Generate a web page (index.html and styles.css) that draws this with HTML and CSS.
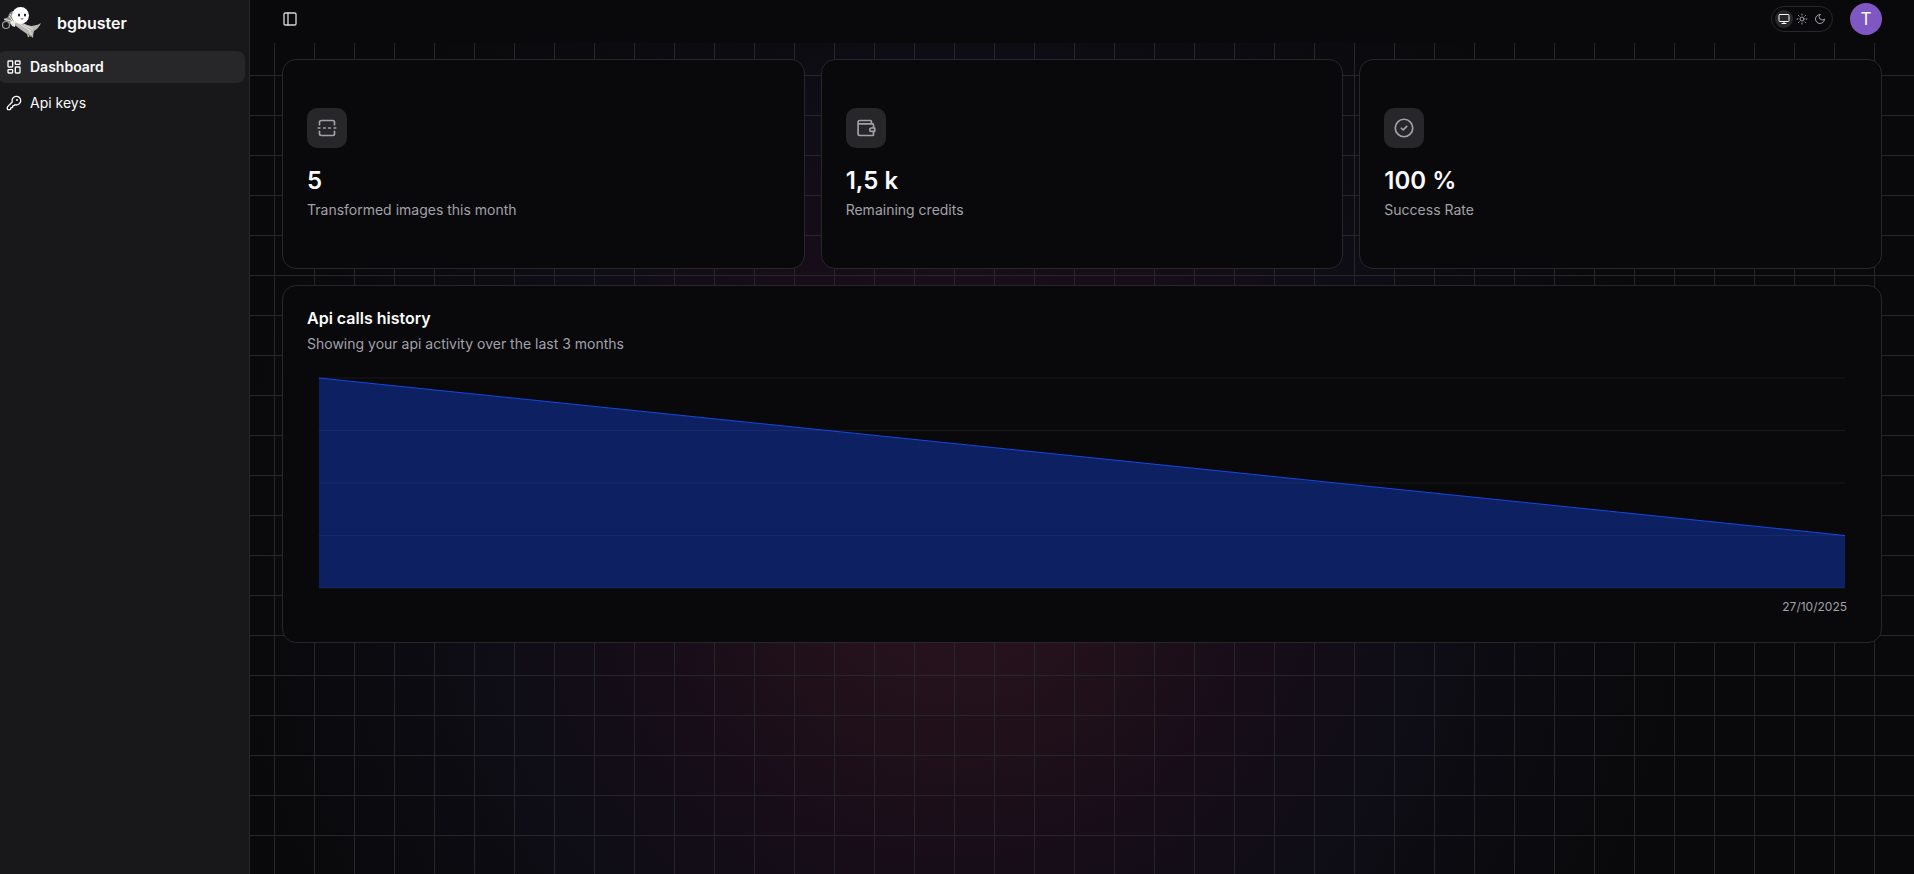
FILE: index.html
```html
<!DOCTYPE html>
<html lang="en">
<head>
  <meta charset="UTF-8">
  <meta name="viewport" content="width=device-width, initial-scale=1.0">
  <title>bgbuster</title>
  <link rel="stylesheet" href="styles.css">
</head>
<body>
  <aside class="sidebar">
    <a class="brand" href="#">
      <svg class="brand-logo" viewBox="0 0 40 40" aria-hidden="true">
        <path d="M15 19 L22 20 Q29 24 33 22.500 Q37 22 40 20 Q38 25 33 28 Q32 31 32 35 L29.500 32.500 L27 34.500 L26 31 Q20 27 15 23 Z" fill="#b9b7b2"/>
        <path d="M17 20 L30 28 M23 22 L32 26 M28 28 L31 32" stroke="#e6e4df" stroke-width="1" fill="none"/>
        <path d="M27 31 L30 34" stroke="#7b776d" stroke-width="1"/>
        <path d="M12 8 Q8 9 7 14 L3 16 Q3 18 6 18 L9 21 L15 23 L14 14 Z" fill="#8b8983"/>
        <path d="M9 11 L12 15 M3 16 L10 18 M8 13 L13 20" stroke="#e4e4e0" stroke-width="1"/>
        <circle cx="5" cy="22" r="3.500" fill="none" stroke="#a3a19c" stroke-width="1.200"/>
        <circle cx="19.500" cy="12.500" r="8.500" fill="#fff"/>
        <ellipse cx="18" cy="12" rx="1" ry="1.600" fill="#111"/>
        <ellipse cx="24" cy="12" rx="1" ry="1.600" fill="#111"/>
        <path d="M19.800 15.500 Q21 16.800 22.300 15.500" stroke="#222" stroke-width="0.800" fill="none"/>
        <path d="M9 19 Q12 16 15 19 L14 24 L11 23 Z" fill="#e9e9e6"/>
      </svg>
      <span>bgbuster</span>
    </a>

    <nav class="menu">
      <a class="menu-item active" href="#">
        <svg class="icon" viewBox="0 0 24 24"><rect x="3" y="3" width="7" height="9" rx="1"/><rect x="14" y="3" width="7" height="5" rx="1"/><rect x="14" y="12" width="7" height="9" rx="1"/><rect x="3" y="16" width="7" height="5" rx="1"/></svg>
        <span>Dashboard</span>
      </a>
      <a class="menu-item" href="#">
        <svg class="icon" viewBox="0 0 24 24"><path d="M2.586 17.414A2 2 0 0 0 2 18.828V21a1 1 0 0 0 1 1h3a1 1 0 0 0 1-1v-1a1 1 0 0 1 1-1h1a1 1 0 0 0 1-1v-1a1 1 0 0 1 1-1h.172a2 2 0 0 0 1.414-.586l.814-.814a6.500 6.500 0 1 0-4-4z"/><circle cx="16.500" cy="7.500" r=".5" fill="currentColor"/></svg>
        <span>Api keys</span>
      </a>
    </nav>
  </aside>

  <div class="main">
    <header class="topbar">
      <button class="sidebar-toggle" type="button" aria-label="Toggle sidebar">
        <svg class="icon" viewBox="0 0 24 24"><rect x="3" y="3" width="18" height="18" rx="2"/><path d="M9 3v18"/></svg>
      </button>

      <div class="topbar-right">
        <div class="theme-switch">
          <button class="theme-btn active" type="button" aria-label="System theme">
            <svg class="icon" viewBox="0 0 24 24"><rect x="2" y="3" width="20" height="14" rx="2"/><path d="M8 21h8M12 17v4"/></svg>
          </button>
          <button class="theme-btn" type="button" aria-label="Light theme">
            <svg class="icon" viewBox="0 0 24 24"><circle cx="12" cy="12" r="4"/><path d="M12 2v2M12 20v2M4.930 4.930l1.410 1.410M17.660 17.660l1.410 1.410M2 12h2M20 12h2M6.340 17.660l-1.410 1.410M19.070 4.930l-1.410 1.410"/></svg>
          </button>
          <button class="theme-btn" type="button" aria-label="Dark theme">
            <svg class="icon" viewBox="0 0 24 24"><path d="M12 3a6 6 0 0 0 9 9 9 9 0 1 1-9-9Z"/></svg>
          </button>
        </div>
        <button class="avatar" type="button" aria-label="Account">T</button>
      </div>
    </header>

    <main class="content">
      <section class="stats">
        <div class="card stat">
          <div class="stat-icon">
            <svg class="icon" viewBox="0 0 24 24"><path d="M3 8V5a2 2 0 0 1 2-2h14a2 2 0 0 1 2 2v3M21 16v3a2 2 0 0 1-2 2H5a2 2 0 0 1-2-2v-3"/><path d="M1.500 12h2M8 12h2M14 12h2M20.500 12h2"/></svg>
          </div>
          <div class="stat-value">5</div>
          <div class="stat-label">Transformed images this month</div>
        </div>

        <div class="card stat">
          <div class="stat-icon">
            <svg class="icon" viewBox="0 0 24 24"><path d="M18.500 7V4a1 1 0 0 0-1-1H4.500a2 2 0 0 0 0 4H20a1 1 0 0 1 1 1v3.500M21 16.500V20a1 1 0 0 1-1 1H4.500a2 2 0 0 1-2-2V5"/><path d="M22.500 12h-4a2 2 0 0 0 0 4h4z"/></svg>
          </div>
          <div class="stat-value">1,5 k</div>
          <div class="stat-label">Remaining credits</div>
        </div>

        <div class="card stat">
          <div class="stat-icon">
            <svg class="icon" viewBox="0 0 24 24"><circle cx="12" cy="12" r="10.500"/><path d="m8.800 12.300 2.200 2 4.300-4.200"/></svg>
          </div>
          <div class="stat-value">100 %</div>
          <div class="stat-label">Success Rate</div>
        </div>
      </section>

      <section class="card history">
        <h2 class="history-title">Api calls history</h2>
        <p class="history-text">Showing your api activity over the last 3 months</p>

        <div class="chart">
          <svg class="chart-plot" viewBox="0 0 100 100" preserveAspectRatio="none" role="img" aria-label="Api calls">
            <path class="chart-grid" d="M0 0H100M0 25H100M0 50H100M0 75H100M0 100H100"/>
            <path class="chart-area" d="M0 0L100 75V100H0Z"/>
            <path class="chart-line" d="M0 0L100 75"/>
          </svg>
          <div class="chart-axis">27/10/2025</div>
        </div>
      </section>
    </main>
  </div>
</body>
</html>
```

FILE: styles.css
```css
* {
  box-sizing: border-box;
}

body {
  margin: 0;
  min-height: 100vh;
  display: flex;
  background-color: #09090b;
  color: #fafafa;
  font-family: Inter, sans-serif;
  font-size: 14px;
  line-height: 20px;
}

button {
  padding: 0;
  border: 0;
  background: none;
  color: inherit;
  font: inherit;
  cursor: pointer;
}

a {
  color: inherit;
  text-decoration: none;
}

.icon {
  width: 16px;
  height: 16px;
  flex-shrink: 0;
  fill: none;
  stroke: currentColor;
  stroke-width: 2;
  stroke-linecap: round;
  stroke-linejoin: round;
}

/* Sidebar */
.sidebar {
  width: 250px;
  flex-shrink: 0;
  overflow: hidden;
  background-color: #18181b;
  border-right: 1px solid #27272a;
}

.brand {
  display: flex;
  align-items: center;
  gap: 16px;
  padding: 3px 1px;
  font-size: 16px;
  font-weight: 600;
}
.brand-logo {
  width: 40px;
  height: 40px;
}

.menu {
  display: flex;
  flex-direction: column;
  gap: 4px;
  margin: 5px 4px 0 -2px;
}
.menu-item {
  display: flex;
  align-items: center;
  gap: 8px;
  height: 32px;
  padding: 0 8px;
  border-radius: 8px;
}
.menu-item:hover,
.menu-item.active {
  background-color: #27272a;
}
.menu-item.active {
  font-weight: 600;
}

/* Main area: grid lines over a soft glow */
.main {
  flex: 1;
  min-width: 0;
  background-image:
    linear-gradient(to right, #27272a 1px, transparent 1px),
    linear-gradient(to bottom, #27272a 1px, transparent 1px),
    radial-gradient(circle at calc(50% - 125px) 64%,
      #2b1220 0,
      #26121d 90px,
      #1f101a 200px,
      #180d19 290px,
      #0f0d16 460px,
      #0b0a0e 640px,
      #09090b 750px);
  background-size: 40px 40px, 40px 40px, 100% 100%;
  background-position: 24px 35px, 24px 35px, 0 0;
}

.topbar {
  display: flex;
  align-items: center;
  justify-content: space-between;
  padding: 3px 32px 8px;
  background-color: #09090b;
}
.topbar-right {
  display: flex;
  align-items: center;
  gap: 17px;
}
.sidebar-toggle {
  display: flex;
  color: #d4d4d8;
}

.theme-switch {
  display: flex;
  padding: 3px;
  border: 1px solid #27272a;
  border-radius: 13px;
}
.theme-btn {
  display: flex;
  align-items: center;
  justify-content: center;
  width: 18px;
  height: 18px;
  border-radius: 50%;
  color: #a1a1aa;
}
.theme-btn.active {
  background-color: #27272a;
  color: #fafafa;
}
.theme-btn .icon {
  width: 12px;
  height: 12px;
}

.avatar {
  width: 32px;
  height: 32px;
  border-radius: 50%;
  background-color: #7e57c2;
  font-size: 17px;
}

/* Cards */
.content {
  display: flex;
  flex-direction: column;
  gap: 16px;
  padding: 16px 32px;
}
.stats {
  display: grid;
  grid-template-columns: repeat(3, 1fr);
  gap: 16px;
}
.card {
  background-color: #09090b;
  border: 1px solid #27272a;
  border-radius: 14px;
}

.stat {
  padding: 48px 24px;
}
.stat-icon {
  display: flex;
  align-items: center;
  justify-content: center;
  width: 40px;
  height: 40px;
  border-radius: 10px;
  background-color: #27272a;
  color: #a1a1aa;
}
.stat-icon .icon {
  width: 20px;
  height: 20px;
}
.stat-value {
  margin: 17px 0 3px;
  font-size: 24px;
  font-weight: 600;
  line-height: 32px;
}
.stat-label,
.history-text {
  color: #a1a1aa;
}

.history {
  padding: 24px;
}
.history-title {
  margin: 0 0 8px;
  font-size: 16px;
  font-weight: 600;
  line-height: 16px;
}
.history-text {
  margin: 0;
}

.chart {
  padding: 24px 12px 0;
}
.chart-plot {
  display: block;
  width: 100%;
  height: 210px;
  overflow: visible;
}
.chart-plot path {
  vector-effect: non-scaling-stroke;
}
.chart-grid {
  fill: none;
  stroke: #18181b;
}
.chart-area {
  fill: #1447e6;
  fill-opacity: 0.4;
}
.chart-line {
  fill: none;
  stroke: #1447e6;
}
.chart-axis {
  height: 30px;
  padding-top: 9px;
  margin-right: -2px;
  color: #a1a1aa;
  font-size: 12px;
  text-align: right;
}
```
